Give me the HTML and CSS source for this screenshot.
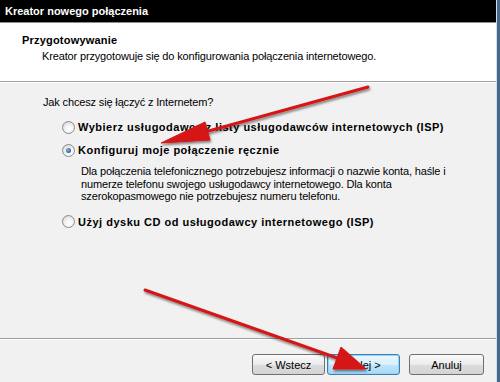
FILE: index.html
```html
<!DOCTYPE html>
<html lang="pl">
<head>
  <meta charset="UTF-8">
  <title>Kreator nowego połączenia</title>
  <link rel="stylesheet" href="styles.css">
</head>
<body>
  <div class="window">
    <div class="dialog">
      <div class="titlebar">Kreator nowego połączenia</div>

      <div class="header">
        <h2>Przygotowywanie</h2>
        <p>Kreator przygotowuje się do konfigurowania połączenia internetowego.</p>
      </div>

      <div class="content">
        <p class="question">Jak chcesz się łączyć z Internetem?</p>

        <div class="option first">
          <span class="radio"></span>
          <span class="option-label">Wybierz usługodawcę z listy usługodawców internetowych (ISP)</span>
        </div>
        <div class="option second">
          <span class="radio checked"></span>
          <span class="option-label">Konfiguruj moje połączenie ręcznie</span>
        </div>
        <p class="description">Dla połączenia telefonicznego potrzebujesz informacji o nazwie konta, haśle i<br>
        numerze telefonu swojego usługodawcy internetowego. Dla konta<br>
        szerokopasmowego nie potrzebujesz numeru telefonu.</p>
        <div class="option third">
          <span class="radio"></span>
          <span class="option-label">Użyj dysku CD od usługodawcy internetowego (ISP)</span>
        </div>
      </div>

      <div class="footer">
        <button class="btn back">&lt; Wstecz</button>
        <button class="btn next">Dalej &gt;</button>
        <button class="btn cancel">Anuluj</button>
      </div>
    </div>
  </div>

  <!-- red arrows drawn over the screenshot -->
  <svg class="arrows" width="500" height="382" viewBox="0 0 500 382">
    <defs>
      <filter id="shadow" x="-10%" y="-30%" width="120%" height="160%">
        <feDropShadow dx="1" dy="2" stdDeviation="1.2" flood-color="#000" flood-opacity="0.45"/>
      </filter>
    </defs>
    <g filter="url(#shadow)" fill="#d41616" stroke="#d41616">
      <line x1="368" y1="87" x2="205" y2="132" stroke-width="3" stroke-linecap="round"/>
      <polygon points="161,143 210,140 205,122" stroke-width="1"/>
      <line x1="145" y1="290" x2="340" y2="359" stroke-width="3" stroke-linecap="round"/>
      <polygon points="366,369 333,369 341,347" stroke-width="1"/>
    </g>
  </svg>
</body>
</html>
```

FILE: styles.css
```css
:root {
  --frame-dark: #45698c;
  --frame-light: #d3dde8;
  --panel: #f1f1f1;
  --line: #a0a0a0;
  --text: #000;
}
html, body {
  margin: 0;
  padding: 0;
}
body {
  position: relative;
  width: 500px;
  height: 382px;
  overflow: hidden;
  font-family: "Liberation Sans", Arial, sans-serif;
  font-size: 11px;
  letter-spacing: -0.15px;
  color: var(--text);
  background: var(--panel);
}
.window {
  width: 497px;
  height: 382px;
  border-right: 3px solid var(--frame-dark);
}
.dialog {
  height: 100%;
  display: flex;
  flex-direction: column;
  border-right: 1px solid var(--frame-light);
}
.titlebar {
  height: 22px;
  line-height: 22px;
  padding-left: 5px;
  background: #000;
  color: #fff;
  font-weight: bold;
  letter-spacing: 0;
  border-bottom: 1px solid #8c8c8c;
}
.header {
  height: 58px;
  background: #fff;
  border-bottom: 1px solid var(--line);
}
.header h2 {
  margin: 0;
  padding: 11px 0 0 22px;
  font-size: 11px;
  line-height: 13px;
  letter-spacing: 0.2px;
}
.header p {
  margin: 3px 0 0 42px;
  line-height: 13px;
}
.content {
  flex: 1;
  padding: 13px 0 0 43px;
  background: var(--panel);
  border-top: 1px solid #fff;
}
.question {
  margin: 0;
  line-height: 13px;
}
.option {
  display: flex;
  align-items: center;
  gap: 3px;
  height: 14px;
  margin-left: 19px;
}
.option.first { margin-top: 11px; }
.option.second { margin-top: 9px; }
.option.third { margin-top: 12px; }
.option-label {
  font-weight: bold;
  font-size: 11px;
  letter-spacing: 0.5px;
}
.radio {
  position: relative;
  width: 11px;
  height: 11px;
  border: 1px solid #8b8b8b;
  border-radius: 50%;
  background: radial-gradient(circle at 60% 65%, #ffffff 0%, #f2f2f2 45%, #c9c9c9 100%);
}
.radio.checked::after {
  content: "";
  position: absolute;
  left: 3px;
  top: 3px;
  width: 5px;
  height: 5px;
  border-radius: 50%;
  background: radial-gradient(circle at 40% 40%, #8fb8e6 0%, #3a6fb0 55%, #1d4a86 100%);
}
.description {
  margin: 8px 0 0 38px;
  line-height: 12.5px;
}
.footer {
  height: 44px;
  display: flex;
  align-items: flex-start;
  justify-content: flex-end;
  padding: 15px 12px 0 0;
  box-sizing: border-box;
  border-top: 1px solid var(--line);
  box-shadow: inset 0 1px 0 #fff;
}
.btn {
  width: 73px;
  height: 21px;
  padding: 0;
  font-family: inherit;
  font-size: 11px;
  color: #000;
  border: 1px solid #707070;
  border-radius: 3px;
  background: linear-gradient(#fbfbfb, #ebebeb 50%, #dcdcdc 51%, #d4d4d4);
}
.btn.next {
  margin-left: 2px;
  border-color: #3c7fb1;
  background: linear-gradient(#eaf6fd, #d9f0fc 50%, #bee6fd 51%, #a7d9f5);
  box-shadow: inset 0 0 0 1px #9bd1f2;
}
.btn.cancel {
  width: 75px;
  margin-left: 9px;
}
.arrows {
  position: absolute;
  left: 0;
  top: 0;
  pointer-events: none;
}
```
